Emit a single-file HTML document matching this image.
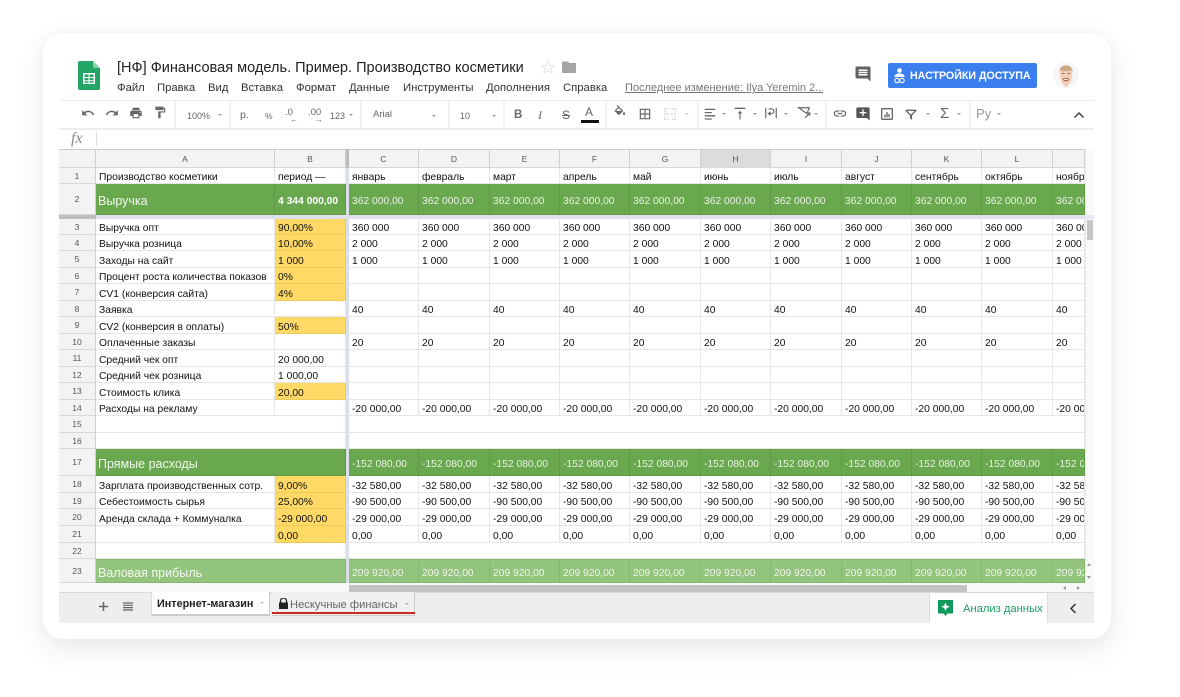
<!DOCTYPE html>
<html><head><meta charset="utf-8"><style>
*{box-sizing:border-box}
html,body{margin:0;padding:0;width:1180px;height:697px;overflow:hidden;background:#fff;font-family:"Liberation Sans","Noto Sans CJK SC",sans-serif;color:#222}
#card{position:absolute;left:43px;top:33px;width:1068px;height:606px;background:#fff;border-radius:20px;box-shadow:0 10px 30px rgba(0,0,0,.09),0 0 10px rgba(0,0,0,.03)}
.a{position:absolute;white-space:nowrap}
.ic{position:absolute;fill:#666}
.car{position:absolute;width:0;height:0;border-left:2px solid transparent;border-right:2px solid transparent;border-top:2.5px solid #999}
.sep{position:absolute;top:101px;width:2px;height:27px;background:#f1f1f1}
.m{top:81px;font-size:11.3px;color:#333;line-height:14px}
.t{top:109px;font-size:9px;color:#666;line-height:14px}
table{position:absolute;left:59px;top:149px;width:1026px;border-collapse:separate;border-spacing:0;table-layout:fixed;font-size:10.3px;color:#111}
td,th{padding:0 0 0 3px;overflow:hidden;white-space:nowrap;border-right:1px solid #e6e6e6;border-bottom:1px solid #e6e6e6;font-weight:400;line-height:11px;vertical-align:middle;text-align:left}
td{padding-top:4px}
th{background:#f3f3f3;text-align:center;padding:0;font-size:8.5px;line-height:12px;color:#555;border-right:1px solid #d0d0d0;border-bottom:1px solid #d8d8d8}
tr.hd th{border-top:1px solid #ccc}
td.c{padding-left:6px}
.y{background:#ffd966;border-right-color:#efc95a;border-bottom-color:#efc95a}
.g td{background:#6aa84f;color:#e9f3e4;border-right-color:#5f9c45;border-bottom-color:#5f9c45}
.l td{background:#93c47d;color:#eef6ea;border-right-color:#85b86f;border-bottom-color:#85b86f;border-top:1px solid #85b86f}
td.big{font-size:12.5px;color:#f3f9f0;padding-left:2px}
.fr td{padding:0;background:#dde2ee;border:0}
.fr th{background:#bdbdbd;border:0}
</style></head><body>
<div id="card"></div>

<!-- logo -->
<svg class="a" style="left:78px;top:61px" width="22" height="29" viewBox="0 0 22 29"><path d="M2 0h13l7 7v20a2 2 0 0 1-2 2H2a2 2 0 0 1-2-2V2a2 2 0 0 1 2-2z" fill="#23a566"/><path d="M15 0l7 7h-5a2 2 0 0 1-2-2z" fill="#8ed1b1"/><path d="M5 12h12v11H5z" fill="#fff"/><path d="M6.500 13.500h4v2.500h-4zM11.500 13.500h4v2.500h-4zM6.500 17h4v2.200h-4zM11.500 17h4v2.200h-4zM6.500 20.200h4v1.600h-4zM11.500 20.200h4v1.600h-4z" fill="#23a566"/></svg>

<div class="a" style="left:117px;top:59px;font-size:14.55px;line-height:18px;color:#222">[НФ] Финансовая модель. Пример. Производство косметики</div>
<svg class="a" style="left:541px;top:60px" width="14" height="14" viewBox="0 0 24 24"><path d="M12 2l3 7 7.500.7-5.700 4.900 1.700 7.400L12 18l-6.500 4 1.700-7.400L1.500 9.700 9 9z" fill="none" stroke="#e6e6e6" stroke-width="1.800"/></svg>
<svg class="a" style="left:562px;top:60px" width="15" height="14" viewBox="0 0 15 14"><path d="M0 1.500h6l1.500 1.500H14v10H0z" fill="#a5a5a5"/></svg>

<div class="a m" style="left:117px">Файл</div>
<div class="a m" style="left:157px">Правка</div>
<div class="a m" style="left:208px">Вид</div>
<div class="a m" style="left:241px">Вставка</div>
<div class="a m" style="left:296px">Формат</div>
<div class="a m" style="left:349px">Данные</div>
<div class="a m" style="left:403px">Инструменты</div>
<div class="a m" style="left:486px">Дополнения</div>
<div class="a m" style="left:563px">Справка</div>
<div class="a m" style="left:625px;color:#777;text-decoration:underline;width:198px;overflow:hidden;font-size:11px">Последнее изменение: Ilya Yeremin 2...</div>

<svg class="ic" style="left:854px;top:65px;fill:#616161" width="18" height="18" viewBox="0 0 24 24"><path d="M21.990 4c0-1.100-.89-2-1.990-2H4c-1.100 0-2 .9-2 2v12c0 1.100.9 2 2 2h14l4 4-.01-18zM18 14H6v-2h12v2zm0-3H6V9h12v2zm0-3H6V6h12v2z"/></svg>
<div class="a" style="left:888px;top:63px;width:149px;height:25px;background:#3b7eee;border-radius:2px"></div>
<svg class="a" style="left:893px;top:68px" width="13" height="16" viewBox="0 0 13 16"><circle cx="6.500" cy="2.500" r="2.300" fill="#fff"/><path d="M1.500 9c0-2.500 2-3.500 5-3.500s5 1 5 3.500z" fill="#fff"/><circle cx="4" cy="12.500" r="2.200" fill="none" stroke="#fff" stroke-width="1.100"/><circle cx="9" cy="12.500" r="2.200" fill="none" stroke="#fff" stroke-width="1.100"/></svg>
<div class="a" style="left:910px;top:69px;font-size:11.2px;line-height:14px;color:#fff;font-weight:700;transform-origin:left;transform:scaleX(.95)">НАСТРОЙКИ ДОСТУПА</div>

<!-- avatar -->
<svg class="a" style="left:1053px;top:62px" width="26" height="26" viewBox="0 0 26 26"><circle cx="13" cy="13" r="13" fill="#f6f6f9"/><path d="M6.500 9C7 1.500 19 1.500 19.500 9l-.5 3H7z" fill="#c9a883"/><path d="M7 8c2.500 1.500 9.500 1.500 12 0 .5 7 0 13-6 17C7 21 6.500 15 7 8z" fill="#f3cdb4"/><path d="M9 11.500h2.500M14.500 11.500h2.500" stroke="#8a6a55" stroke-width=".9"/><path d="M9.500 17c2.500-1.500 4.500-1.500 7 0-1 3-6 3-7 0z" fill="#a0695a"/><path d="M11 17.400h4" stroke="#fff" stroke-width=".9"/></svg>

<!-- toolbar -->
<div class="a" style="left:59px;top:100px;width:1035px;height:1px;background:#eee"></div>
<div class="a" style="left:59px;top:128px;width:1035px;height:2px;background:#eee"></div>
<div class="sep" style="left:174px"></div><div class="sep" style="left:229px"></div><div class="sep" style="left:360px"></div><div class="sep" style="left:448px"></div><div class="sep" style="left:503px"></div><div class="sep" style="left:605px"></div><div class="sep" style="left:697px"></div><div class="sep" style="left:825px"></div><div class="sep" style="left:969px"></div>

<svg class="ic" style="left:81px;top:106px" width="14" height="14" viewBox="0 0 24 24"><path d="M12.500 8c-2.650 0-5.050.99-6.900 2.600L2 7v9h9l-3.620-3.620c1.390-1.160 3.160-1.880 5.120-1.880 3.540 0 6.550 2.310 7.600 5.500l2.370-.78C21.080 11.030 17.150 8 12.500 8z"/></svg>
<svg class="ic" style="left:105px;top:106px" width="14" height="14" viewBox="0 0 24 24"><path d="M18.400 10.600C16.550 8.990 14.150 8 11.500 8c-4.650 0-8.580 3.030-9.960 7.220L3.900 16c1.050-3.190 4.050-5.500 7.600-5.500 1.950 0 3.730.72 5.120 1.880L13 16h9V7l-3.600 3.600z"/></svg>
<svg class="ic" style="left:129px;top:106px" width="14" height="14" viewBox="0 0 24 24"><path d="M19 8H5c-1.660 0-3 1.340-3 3v6h4v4h12v-4h4v-6c0-1.660-1.340-3-3-3zm-3 11H8v-5h8v5zm3-7c-.55 0-1-.45-1-1s.45-1 1-1 1 .45 1 1-.45 1-1 1zm-1-9H6v4h12V3z"/></svg>
<svg class="ic" style="left:153px;top:105px" width="14" height="15" viewBox="0 0 24 24"><path d="M18 4V3c0-.55-.45-1-1-1H5c-.55 0-1 .45-1 1v4c0 .55.45 1 1 1h12c.55 0 1-.45 1-1V6h1v4H9v11c0 .55.45 1 1 1h2c.55 0 1-.45 1-1v-9h8V4h-3z"/></svg>

<div class="a t" style="left:187px">100%</div><div class="car" style="left:218px;top:114px"></div>
<div class="a t" style="left:240px;top:108px;font-size:10.5px">р.</div>
<div class="a t" style="left:265px;font-size:8.5px">%</div>
<div class="a t" style="left:285px;top:106px;font-size:9.5px">.0</div><div class="a" style="left:290px;top:116px;font-size:8px;line-height:8px;color:#666">←</div>
<div class="a t" style="left:308px;top:106px;font-size:9.5px">.00</div><div class="a" style="left:315px;top:116px;font-size:8px;line-height:8px;color:#666">→</div>
<div class="a t" style="left:330px">123</div><div class="car" style="left:349px;top:114px"></div>
<div class="a t" style="left:373px;top:108px;font-size:9.5px">Arial</div><div class="car" style="left:432px;top:115px"></div>
<div class="a t" style="left:460px">10</div><div class="car" style="left:492px;top:115px"></div>
<div class="a t" style="left:514px;top:108px;font-size:11.5px;font-weight:700">B</div>
<div class="a t" style="left:538px;top:108px;font-size:12px;font-style:italic;font-family:'Liberation Serif',serif">I</div>
<div class="a t" style="left:562px;top:108px;font-size:12px;text-decoration:line-through">S</div>
<div class="a t" style="left:585px;top:105px;font-size:12px">A</div>
<div class="a" style="left:581px;top:120px;width:18px;height:3px;background:#111"></div>

<svg class="ic" style="left:613px;top:105px" width="14" height="14" viewBox="0 0 24 24"><path d="M16.560 8.940L7.620 0 6.210 1.410l2.380 2.380-5.150 5.150c-.59.59-.59 1.540 0 2.120l5.500 5.500c.29.29.68.44 1.060.44s.77-.15 1.060-.44l5.500-5.500c.59-.58.59-1.530 0-2.120zM5.210 10L10 5.210 14.790 10H5.210zM19 11.500s-2 2.170-2 3.500c0 1.100.9 2 2 2s2-.9 2-2c0-1.330-2-3.500-2-3.500z"/></svg>
<svg class="ic" style="left:638px;top:107px" width="14" height="14" viewBox="0 0 24 24"><path d="M3 3v18h18V3H3zm8 16H5v-6h6v6zm0-8H5V5h6v6zm8 8h-6v-6h6v6zm0-8h-6V5h6v6z"/></svg>
<svg class="ic" style="left:663px;top:107px;fill:none;stroke:#ccc;stroke-width:2" width="14" height="14" viewBox="0 0 24 24"><path d="M3 9V3h6M15 3h6v6M21 15v6h-6M9 21H3v-6M3 12h7M14 12h7" stroke-dasharray="3 2"/></svg><div class="car" style="left:685px;top:113px;border-top-color:#ccc"></div>

<svg class="ic" style="left:703px;top:107px" width="14" height="14" viewBox="0 0 24 24"><path d="M3 3h18v2.200H3zM3 8.500h12v2.200H3zM3 14h18v2.200H3zM3 19.500h12v2.200H3z"/></svg><div class="car" style="left:722px;top:113px"></div>
<svg class="ic" style="left:733px;top:106px" width="14" height="15" viewBox="0 0 24 24"><path d="M3 2h18v2.200H3zM8 12h3v10h2V12h3l-4-4.500z"/></svg><div class="car" style="left:753px;top:113px"></div>
<svg class="ic" style="left:764px;top:106px;fill:none;stroke:#666;stroke-width:2" width="14" height="14" viewBox="0 0 24 24"><path d="M3 3v18M21 3v18M8 5h5a3.500 3.500 0 0 1 0 8H8l3-3M8 13l3 3"/></svg><div class="car" style="left:784px;top:113px"></div>
<svg class="ic" style="left:797px;top:106px;fill:none;stroke:#666;stroke-width:2" width="14" height="14" viewBox="0 0 24 24"><path d="M3 3h10l8 0-4 10L3 3zM14 20l8-8M22 17v-5h-5"/></svg><div class="car" style="left:814px;top:113px"></div>

<svg class="ic" style="left:832px;top:106px" width="16" height="15" viewBox="0 0 24 24"><path d="M3.900 12c0-1.710 1.390-3.100 3.100-3.100h4V7H7c-2.760 0-5 2.240-5 5s2.240 5 5 5h4v-1.900H7c-1.710 0-3.100-1.390-3.100-3.100zM8 13h8v-2H8v2zm9-6h-4v1.900h4c1.710 0 3.100 1.390 3.100 3.100s-1.390 3.100-3.100 3.100h-4V17h4c2.760 0 5-2.240 5-5s-2.240-5-5-5z"/></svg>
<svg class="ic" style="left:855px;top:106px;fill:#555" width="16" height="16" viewBox="0 0 24 24"><path d="M21.990 4c0-1.100-.89-2-1.990-2H4c-1.100 0-2 .9-2 2v12c0 1.100.9 2 2 2h14l4 4-.01-18zM17 11h-4v4h-2v-4H7V9h4V5h2v4h4v2z"/></svg>
<svg class="ic" style="left:879px;top:106px" width="16" height="16" viewBox="0 0 24 24"><path d="M19 3H5c-1.100 0-2 .9-2 2v14c0 1.100.9 2 2 2h14c1.100 0 2-.9 2-2V5c0-1.100-.9-2-2-2zm0 16H5V5h14v14zM8 13h2v4H8zM11 9h2v8h-2zM14 12h2v5h-2z"/></svg>
<svg class="ic" style="left:904px;top:108px" width="14" height="13" viewBox="0 0 24 24"><path d="M2 3h20v2.500l-8 8V22l-4-3v-5.500l-8-8zM5.500 5.500l6.500 6.500 6.500-6.500z" fill-rule="evenodd"/></svg><div class="car" style="left:926px;top:113px"></div>
<div class="a" style="left:940px;top:105px;font-size:15px;line-height:17px;color:#666">Σ</div><div class="car" style="left:957px;top:113px"></div>
<div class="a" style="left:976px;top:106px;font-size:13px;line-height:15px;color:#999">Ру</div><div class="car" style="left:997px;top:113px"></div>
<svg class="a" style="left:1073px;top:111px" width="12" height="8" viewBox="0 0 12 8"><path d="M1.500 6.500L6 2l4.500 4.500" fill="none" stroke="#555" stroke-width="1.600"/></svg>

<!-- fx -->
<div class="a" style="left:71px;top:130px;font-family:'Liberation Serif',serif;font-style:italic;font-size:16px;line-height:17px;color:#888">fx</div>
<div class="a" style="left:96px;top:132px;width:1px;height:14px;background:#ddd"></div>

<table>
<colgroup><col style="width:37px"><col style="width:179px"><col style="width:71px"><col style="width:73px"><col style="width:71px"><col style="width:70px"><col style="width:70px"><col style="width:71px"><col style="width:70px"><col style="width:71px"><col style="width:70px"><col style="width:70px"><col style="width:71px"><col style="width:32px"></colgroup>
<tr class="hd" style="height:19px"><th></th><th>A</th><th>B</th><th style="padding-left:3px">C</th><th>D</th><th>E</th><th>F</th><th>G</th><th style="background:#dcdcdc">H</th><th>I</th><th>J</th><th>K</th><th>L</th><th></th></tr>
<tr style="height:16px"><th>1</th><td>Производство косметики</td><td>период —</td><td class="c">январь</td><td>февраль</td><td>март</td><td>апрель</td><td>май</td><td>июнь</td><td>июль</td><td>август</td><td>сентябрь</td><td>октябрь</td><td>ноябрь</td></tr>
<tr class="g" style="height:31px"><th>2</th><td class="big">Выручка</td><td style="font-weight:700;color:#fff">4 344 000,00</td><td class="c">362 000,00</td><td>362 000,00</td><td>362 000,00</td><td>362 000,00</td><td>362 000,00</td><td>362 000,00</td><td>362 000,00</td><td>362 000,00</td><td>362 000,00</td><td>362 000,00</td><td>362 000,00</td></tr>
<tr class="fr" style="height:4px"><th></th><td colspan="13"></td></tr>
<tr style="height:16px"><th>3</th><td>Выручка опт</td><td class="y">90,00%</td><td class="c">360 000</td><td>360 000</td><td>360 000</td><td>360 000</td><td>360 000</td><td>360 000</td><td>360 000</td><td>360 000</td><td>360 000</td><td>360 000</td><td>360 000</td></tr>
<tr style="height:16px"><th>4</th><td>Выручка розница</td><td class="y">10,00%</td><td class="c">2 000</td><td>2 000</td><td>2 000</td><td>2 000</td><td>2 000</td><td>2 000</td><td>2 000</td><td>2 000</td><td>2 000</td><td>2 000</td><td>2 000</td></tr>
<tr style="height:17px"><th>5</th><td>Заходы на сайт</td><td class="y">1 000</td><td class="c">1 000</td><td>1 000</td><td>1 000</td><td>1 000</td><td>1 000</td><td>1 000</td><td>1 000</td><td>1 000</td><td>1 000</td><td>1 000</td><td>1 000</td></tr>
<tr style="height:16px"><th>6</th><td>Процент роста количества показов</td><td class="y">0%</td><td class="c"></td><td></td><td></td><td></td><td></td><td></td><td></td><td></td><td></td><td></td><td></td></tr>
<tr style="height:17px"><th>7</th><td>CV1 (конверсия сайта)</td><td class="y">4%</td><td class="c"></td><td></td><td></td><td></td><td></td><td></td><td></td><td></td><td></td><td></td><td></td></tr>
<tr style="height:16px"><th>8</th><td>Заявка</td><td></td><td class="c">40</td><td>40</td><td>40</td><td>40</td><td>40</td><td>40</td><td>40</td><td>40</td><td>40</td><td>40</td><td>40</td></tr>
<tr style="height:17px"><th>9</th><td>CV2 (конверсия в оплаты)</td><td class="y">50%</td><td class="c"></td><td></td><td></td><td></td><td></td><td></td><td></td><td></td><td></td><td></td><td></td></tr>
<tr style="height:16px"><th>10</th><td>Оплаченные заказы</td><td></td><td class="c">20</td><td>20</td><td>20</td><td>20</td><td>20</td><td>20</td><td>20</td><td>20</td><td>20</td><td>20</td><td>20</td></tr>
<tr style="height:17px"><th>11</th><td>Средний чек опт</td><td>20 000,00</td><td class="c"></td><td></td><td></td><td></td><td></td><td></td><td></td><td></td><td></td><td></td><td></td></tr>
<tr style="height:16px"><th>12</th><td>Средний чек розница</td><td>1 000,00</td><td class="c"></td><td></td><td></td><td></td><td></td><td></td><td></td><td></td><td></td><td></td><td></td></tr>
<tr style="height:17px"><th>13</th><td>Стоимость клика</td><td class="y">20,00</td><td class="c"></td><td></td><td></td><td></td><td></td><td></td><td></td><td></td><td></td><td></td><td></td></tr>
<tr style="height:16px"><th>14</th><td>Расходы на рекламу</td><td></td><td class="c">-20 000,00</td><td>-20 000,00</td><td>-20 000,00</td><td>-20 000,00</td><td>-20 000,00</td><td>-20 000,00</td><td>-20 000,00</td><td>-20 000,00</td><td>-20 000,00</td><td>-20 000,00</td><td>-20 000,00</td></tr>
<tr style="height:17px"><th>15</th><td colspan="2"></td><td colspan="11"></td></tr>
<tr style="height:16px"><th>16</th><td colspan="2"></td><td colspan="11"></td></tr>
<tr class="g" style="height:27px"><th>17</th><td class="big" colspan="2">Прямые расходы</td><td class="c">-152 080,00</td><td>-152 080,00</td><td>-152 080,00</td><td>-152 080,00</td><td>-152 080,00</td><td>-152 080,00</td><td>-152 080,00</td><td>-152 080,00</td><td>-152 080,00</td><td>-152 080,00</td><td>-152 080,00</td></tr>
<tr style="height:17px"><th>18</th><td>Зарплата производственных сотр.</td><td class="y">9,00%</td><td class="c">-32 580,00</td><td>-32 580,00</td><td>-32 580,00</td><td>-32 580,00</td><td>-32 580,00</td><td>-32 580,00</td><td>-32 580,00</td><td>-32 580,00</td><td>-32 580,00</td><td>-32 580,00</td><td>-32 580,00</td></tr>
<tr style="height:16px"><th>19</th><td>Себестоимость сырья</td><td class="y">25,00%</td><td class="c">-90 500,00</td><td>-90 500,00</td><td>-90 500,00</td><td>-90 500,00</td><td>-90 500,00</td><td>-90 500,00</td><td>-90 500,00</td><td>-90 500,00</td><td>-90 500,00</td><td>-90 500,00</td><td>-90 500,00</td></tr>
<tr style="height:17px"><th>20</th><td>Аренда склада + Коммуналка</td><td class="y">-29 000,00</td><td class="c">-29 000,00</td><td>-29 000,00</td><td>-29 000,00</td><td>-29 000,00</td><td>-29 000,00</td><td>-29 000,00</td><td>-29 000,00</td><td>-29 000,00</td><td>-29 000,00</td><td>-29 000,00</td><td>-29 000,00</td></tr>
<tr style="height:17px"><th>21</th><td></td><td class="y">0,00</td><td class="c">0,00</td><td>0,00</td><td>0,00</td><td>0,00</td><td>0,00</td><td>0,00</td><td>0,00</td><td>0,00</td><td>0,00</td><td>0,00</td><td>0,00</td></tr>
<tr style="height:16px"><th>22</th><td colspan="2"></td><td colspan="11"></td></tr>
<tr class="l" style="height:24px"><th>23</th><td class="big" colspan="2">Валовая прибыль</td><td class="c">209 920,00</td><td>209 920,00</td><td>209 920,00</td><td>209 920,00</td><td>209 920,00</td><td>209 920,00</td><td>209 920,00</td><td>209 920,00</td><td>209 920,00</td><td>209 920,00</td><td>209 920,00</td></tr>
</table>

<!-- frozen bar -->
<div class="a" style="left:346px;top:149px;width:3px;height:19px;background:#bdbdbd"></div>
<div class="a" style="left:346px;top:168px;width:3px;height:415px;background:#dadfea"></div>

<!-- vertical scrollbar -->
<div class="a" style="left:1085px;top:149px;width:9px;height:434px;background:#f9f9f9;border-left:1px solid #ececec"></div>
<div class="a" style="left:1085px;top:215px;width:9px;height:4px;background:#e4e8f0"></div>
<div class="a" style="left:1087px;top:220px;width:6px;height:20px;background:#c6c6c6"></div>
<div class="a" style="left:1087px;top:563px;width:0;height:0;border-left:2.5px solid transparent;border-right:2.5px solid transparent;border-bottom:3px solid #999"></div>
<div class="a" style="left:1087px;top:576px;width:0;height:0;border-left:2.5px solid transparent;border-right:2.5px solid transparent;border-top:3px solid #999"></div>

<!-- horizontal scrollbar -->
<div class="a" style="left:59px;top:583px;width:1035px;height:9px;background:#f8f8f8"></div>
<div class="a" style="left:349px;top:585px;width:618px;height:7px;background:#c3c3c3"></div>
<div class="a" style="left:1063px;top:586px;width:0;height:0;border-top:2.5px solid transparent;border-bottom:2.5px solid transparent;border-right:3px solid #999"></div>
<div class="a" style="left:1077px;top:586px;width:0;height:0;border-top:2.5px solid transparent;border-bottom:2.5px solid transparent;border-left:3px solid #999"></div>

<!-- tab bar -->
<div class="a" style="left:59px;top:592px;width:1035px;height:31px;background:#eee;border-top:1px solid #d8d8d8"></div>
<svg class="a" style="left:99px;top:602px" width="9" height="9" viewBox="0 0 9 9"><path d="M4.500 0v9M0 4.500h9" stroke="#666" stroke-width="1.500"/></svg>
<svg class="a" style="left:123px;top:602px" width="10" height="9" viewBox="0 0 10 9"><path d="M0 1h10M0 3.300h10M0 5.600h10M0 8h10" stroke="#666" stroke-width="1.200"/></svg>
<div class="a" style="left:151px;top:592px;width:119px;height:24px;background:#fff;border-right:1px solid #ccc;border-left:1px solid #ddd;border-bottom:2px solid #ccc"></div>
<div class="a" style="left:157px;top:597px;font-size:10.8px;line-height:14px;font-weight:700;color:#222">Интернет-магазин</div>
<div class="car" style="left:260px;top:602px;border-top-color:#bbb"></div>
<div class="a" style="left:272px;top:592px;width:143px;height:24px;background:#f0f0f0;border-right:1px solid #ccc;border-bottom:1px solid #ccc"></div>
<div class="a" style="left:272px;top:612px;width:143px;height:2px;background:#d0281e"></div>
<svg class="a" style="left:279px;top:598px" width="9" height="11" viewBox="0 0 9 11"><path d="M1.500 4.500V3a3 3 0 0 1 6 0v1.500" fill="none" stroke="#222" stroke-width="1.300"/><path d="M0 4.500h9V11H0z" fill="#222"/></svg>
<div class="a" style="left:290px;top:598px;font-size:11.2px;line-height:14px;color:#666">Нескучные финансы</div>
<div class="car" style="left:405px;top:603px;border-top-color:#aaa"></div>

<!-- explore -->
<div class="a" style="left:929px;top:593px;width:119px;height:30px;background:#fff;border-left:1px solid #ddd;border-right:1px solid #ddd"></div>
<svg class="a" style="left:938px;top:600px" width="15" height="16" viewBox="0 0 15 16"><path d="M0 0h15v13.500H9.500L7.500 16l-2-2.500H0z" fill="#119a5b"/><path d="M7.500 2.500l1.300 3 3 1.200-3 1.300-1.300 3-1.300-3-3-1.300 3-1.200z" fill="#fff"/></svg>
<div class="a" style="left:963px;top:602px;font-size:11.2px;line-height:14px;color:#1a9e62">Анализ данных</div>
<svg class="a" style="left:1069px;top:603px" width="8" height="11" viewBox="0 0 8 11"><path d="M6.500 1L2 5.500 6.500 10" fill="none" stroke="#333" stroke-width="1.500"/></svg>
</body></html>
